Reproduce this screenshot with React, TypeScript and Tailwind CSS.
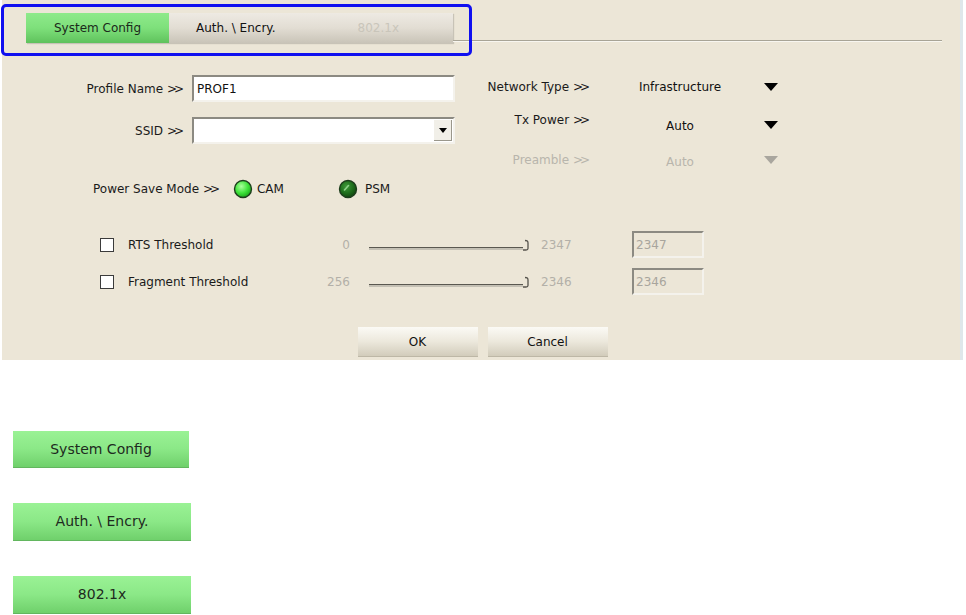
import React from "react";

const FONT = { fontFamily: '"DejaVu Sans", "Liberation Sans", sans-serif' };

function Gt() {
  return <span className="tracking-[-3px] pr-[3px]">&gt;&gt;</span>;
}

function DownArrow({ muted = false }: { muted?: boolean }) {
  return (
    <svg width="14" height="8" viewBox="0 0 14 8">
      <path d="M0 0 L14 0 L7 8 Z" fill={muted ? "#a9a69e" : "#000"} />
    </svg>
  );
}

function Radio({ dark = false }: { dark?: boolean }) {
  const id = dark ? "psm" : "cam";
  return (
    <svg width="20" height="20" viewBox="0 0 20 20">
      <defs>
        <radialGradient id={id} cx="40%" cy="35%" r="65%">
          <stop offset="0%" stopColor={dark ? "#3f9a3a" : "#aaff9c"} />
          <stop offset="60%" stopColor={dark ? "#1f6e1c" : "#3ee23a"} />
          <stop offset="100%" stopColor={dark ? "#124a10" : "#1eaa1c"} />
        </radialGradient>
      </defs>
      <circle cx="10" cy="10" r="8.5" fill={`url(#${id})`} stroke="#1d3d1c" strokeWidth="1.4" />
      {dark && <path d="M6.5 11 L10.5 6.5" stroke="#8fd38a" strokeWidth="1.6" strokeLinecap="round" />}
    </svg>
  );
}

function Thumb() {
  return (
    <svg width="8" height="12" viewBox="0 0 8 12">
      <path d="M2 1.5 Q5 1.5 5 4 L5 9.5 Q5 11 3 11 L0 11" fill="none" stroke="#55534c" strokeWidth="1.3" />
    </svg>
  );
}

function ThresholdRow({ label, min, max }: { label: string; min: string; max: string }) {
  return (
    <div className="flex items-center h-[27px]">
      <div className="ml-[98px] w-[14px] h-[14px] border border-[#3b3b3b] bg-white" />
      <span className="ml-[14px] w-[174px] text-[#1a1a1a]">{label}</span>
      <span className="w-[48px] text-right text-[#b3b0a8]">{min}</span>
      <div className="ml-[19px] flex items-end w-[162px] h-[12px]">
        <div className="flex-1 h-[3px] mb-[1px] border-t border-[#5a5850] bg-[#c4c0b4]" />
        <Thumb />
      </div>
      <span className="ml-[10px] w-[91px] text-[#b3b0a8]">{max}</span>
      <div className="w-[72px] h-[27px] flex items-center pl-[2px] border-2 border-t-[#8c8a82] border-l-[#8c8a82] border-r-[#f4f2ec] border-b-[#f4f2ec] text-[#a8a59d]">
        {max}
      </div>
    </div>
  );
}

export default function App() {
  return (
    <div className="w-[966px] h-[615px] bg-white relative text-[12px]" style={FONT}>
      {/* Dialog panel */}
      <div className="ml-[2px] w-[961px] h-[360px] bg-[#ece6d7] flex flex-col border-r-[3px] border-[#dfe7ea]">
        {/* Tabs + separator */}
        <div className="flex items-end h-[56px] pb-[13px]">
          <div className="ml-[24px] flex h-[30px] w-[427px] shadow-[1px_1px_1px_rgba(0,0,0,0.15)]">
            <div className="w-[143px] flex items-center justify-center bg-gradient-to-b from-[#8eea8b] via-[#7ee07b] to-[#5fc25c] text-[#1b2a1b]">
              System Config
            </div>
            <div className="flex-1 flex items-center bg-gradient-to-b from-[#eeeae3] via-[#e2ddd3] to-[#c9c4b8]">
              <span className="ml-[27px] text-[#111]">Auth. \ Encry.</span>
              <span className="ml-[82px] text-[#c9c5ba]">802.1x</span>
            </div>
          </div>
          <div className="w-[489px] h-[2px] mb-[1px] border-t border-[#a8a496] bg-[#f8f6f0]" />
        </div>

        {/* Form */}
        <div className="flex mt-[19px]">
          <div className="flex flex-col w-[453px]">
            <div className="flex items-center h-[27px]">
              <span className="w-[190px] text-right pr-[8px] text-[#1a1a1a] whitespace-nowrap">Profile Name <Gt /></span>
              <div className="w-[263px] h-[27px] bg-white flex items-center pl-[3px] border-2 border-t-[#8c8a82] border-l-[#8c8a82] border-r-[#f4f2ec] border-b-[#f4f2ec] text-[#111]">
                PROF1
              </div>
            </div>
            <div className="flex items-center h-[27px] mt-[15px]">
              <span className="w-[190px] text-right pr-[8px] text-[#1a1a1a] whitespace-nowrap">SSID <Gt /></span>
              <div className="w-[263px] h-[27px] bg-white flex items-center justify-end border-2 border-t-[#8c8a82] border-l-[#8c8a82] border-r-[#f4f2ec] border-b-[#f4f2ec]">
                <div className="w-[18px] h-[21px] mr-[1px] flex items-center justify-center bg-[#f1efe8] border-r border-b border-[#9a978c]">
                  <svg width="8" height="5" viewBox="0 0 8 5"><path d="M0 0 L8 0 L4 5 Z" fill="#000" /></svg>
                </div>
              </div>
            </div>
          </div>

          <div className="flex flex-col ml-[21px] w-[320px]">
            <div className="flex items-center h-[24px]">
              <span className="w-[114px] text-right text-[#1a1a1a] whitespace-nowrap">Network Type <Gt /></span>
              <span className="w-[168px] ml-[6px] text-center text-[#111]">Infrastructure</span>
              <DownArrow />
            </div>
            <div className="flex items-start h-[24px] mt-[11px]">
              <span className="w-[114px] text-right leading-[20px] text-[#1a1a1a] whitespace-nowrap">Tx Power <Gt /></span>
              <span className="w-[168px] ml-[6px] text-center mt-[6px] leading-[20px] text-[#111]">Auto</span>
              <div className="mt-[11px]"><DownArrow /></div>
            </div>
            <div className="flex items-start h-[24px] mt-[16px]">
              <span className="w-[114px] text-right leading-[20px] text-[#b8b5ac] whitespace-nowrap">Preamble <Gt /></span>
              <span className="w-[168px] ml-[6px] text-center mt-[2px] leading-[20px] text-[#b8b5ac]">Auto</span>
              <div className="mt-[6px]"><DownArrow muted /></div>
            </div>
          </div>
        </div>

        {/* Power save */}
        <div className="flex items-center h-[20px] mt-[5px]">
          <span className="ml-[91px] text-[#1a1a1a] whitespace-nowrap">Power Save Mode <Gt /></span>
          <div className="ml-[13px]"><Radio /></div>
          <span className="ml-[4px] text-[#1a1a1a]">CAM</span>
          <div className="ml-[54px]"><Radio dark /></div>
          <span className="ml-[7px] text-[#1a1a1a]">PSM</span>
        </div>

        {/* Thresholds */}
        <div className="flex flex-col mt-[32px] gap-[10px]">
          <ThresholdRow label="RTS Threshold" min="0" max="2347" />
          <ThresholdRow label="Fragment Threshold" min="256" max="2346" />
        </div>

        {/* Buttons */}
        <div className="flex justify-center gap-[10px] mt-[32px] pl-[3px]">
          <button className="w-[120px] h-[30px] bg-gradient-to-b from-[#fbfaf5] via-[#ece8dc] to-[#d2ccbb] border-b border-[#bdb7a6] text-[#111]">OK</button>
          <button className="w-[120px] h-[30px] bg-gradient-to-b from-[#fbfaf5] via-[#ece8dc] to-[#d2ccbb] border-b border-[#bdb7a6] text-[#111]">Cancel</button>
        </div>
      </div>

      {/* Highlight box around the tabs */}
      <div className="absolute left-[1px] top-[4px] w-[471px] h-[52px] border-[3px] border-[#1010f0] rounded-[5px]" />

      {/* Tab button states */}
      <div className="flex flex-col ml-[13px] mt-[71px] gap-[35px] text-[14px] text-[#1e2a1e]">
        <div className="w-[176px] h-[37px] flex items-center justify-center bg-gradient-to-b from-[#9af295] via-[#8be887] to-[#6fd06b] border-b border-[#62b65e]">System Config</div>
        <div className="w-[178px] h-[38px] flex items-center justify-center bg-gradient-to-b from-[#9af295] via-[#8be887] to-[#6fd06b] border-b border-[#62b65e]">Auth. \ Encry.</div>
        <div className="w-[178px] h-[38px] flex items-center justify-center bg-gradient-to-b from-[#9af295] via-[#8be887] to-[#6fd06b] border-b border-[#62b65e]">802.1x</div>
      </div>
    </div>
  );
}
